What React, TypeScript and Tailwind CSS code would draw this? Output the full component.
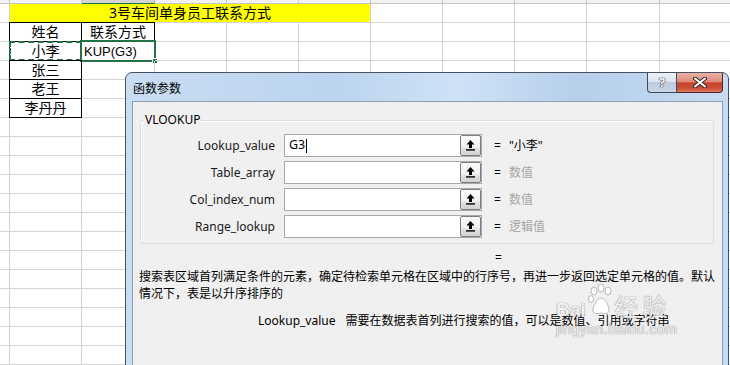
import React from "react";

const COLS =
  "grid grid-cols-[10px_72px_73px_72px_72px_72px_72px_72px_72px_73px_72px]";
const CELL = "relative h-[19px] border-r border-b border-[#d4d4d4]";

function BlackBox() {
  return (
    <div className="pointer-events-none absolute -left-px -top-px -right-px -bottom-px border border-black" />
  );
}

function Empty() {
  return <div className={CELL} />;
}

function Sheet() {
  const names = ["姓名", "小李", "张三", "老王", "李丹丹"];
  const rows: React.ReactNode[] = [];
  for (let r = 1; r <= 19; r++) {
    const cells: React.ReactNode[] = [];
    cells.push(<div key="c0" className={CELL} />);
    if (r === 1) {
      cells.push(
        <div
          key="y"
          className={`${CELL} col-span-5 bg-[#ffff00] flex items-center justify-center text-[14px] leading-none text-black`}
        >
          3号车间单身员工联系方式
        </div>
      );
      for (let i = 0; i < 5; i++) cells.push(<Empty key={"e" + i} />);
    } else if (r >= 2 && r <= 6) {
      cells.push(
        <div
          key="a"
          className={`${CELL} flex items-center justify-center text-[14px] leading-none text-black`}
        >
          {names[r - 2]}
          <BlackBox />
          {r === 3 && (
            <div className="pointer-events-none absolute -left-[1px] -top-[1px] -right-[1px] -bottom-[1px] border-2 border-dashed border-[#217346]" />
          )}
        </div>
      );
      if (r === 2) {
        cells.push(
          <div
            key="b"
            className={`${CELL} flex items-center justify-center text-[14px] leading-none text-black`}
          >
            联系方式
            <BlackBox />
          </div>
        );
      } else if (r === 3) {
        cells.push(
          <div
            key="b"
            className={`${CELL} flex items-center pl-[2px] font-['Liberation_Sans',sans-serif] text-[13px] leading-none text-black`}
          >
            KUP(G3)
            <div className="pointer-events-none absolute -left-[2px] -top-[2px] -right-[2px] -bottom-[2px] border-2 border-[#217346]" />
            <div className="pointer-events-none absolute -right-[4px] -bottom-[4px] h-[6px] w-[6px] border border-white bg-[#217346]" />
          </div>
        );
      } else {
        cells.push(<Empty key="b" />);
      }
      for (let i = 0; i < 8; i++) cells.push(<Empty key={"e" + i} />);
    } else {
      for (let i = 0; i < 10; i++) cells.push(<Empty key={"e" + i} />);
    }
    rows.push(
      <div key={r} className={COLS}>
        {cells}
      </div>
    );
  }

  const head: React.ReactNode[] = [];
  for (let i = 0; i < 11; i++) {
    head.push(
      <div
        key={i}
        className={
          i === 2
            ? "h-[4px] border-r border-b border-[#9fb3a6] border-b-[#217346] bg-[#d3d3d3]"
            : "h-[4px] border-r border-b border-[#c6c6c6] bg-[#f3f3f3]"
        }
      />
    );
  }

  return (
    <div className="flex flex-col">
      <div className={COLS}>{head}</div>
      {rows}
    </div>
  );
}

function RefButton() {
  return (
    <div className="ml-auto flex h-[21px] w-[21px] items-center justify-center rounded-[2px] border border-[#7e7e7e] bg-[linear-gradient(180deg,#fbfbfb_0%,#f1f1f1_55%,#dedede_70%,#d2d2d2_100%)]">
      <svg width="9" height="11" viewBox="0 0 9 11">
        <polygon points="4.5,0 0.5,4.5 3,4.5 3,8 6,8 6,4.5 8.5,4.5" fill="#000" />
        <rect x="0" y="9.2" width="9" height="1.4" fill="#000" />
      </svg>
    </div>
  );
}

function ArgRow({
  label,
  value,
  result,
  dim,
}: {
  label: string;
  value?: string;
  result: string;
  dim?: boolean;
}) {
  return (
    <div className="flex h-[23px] items-center">
      <div className="w-[134px] text-right text-[12px] leading-none text-[#1a1a1a]">
        {label}
      </div>
      <div className="ml-[9px] flex h-[23px] w-[198px] items-center border border-[#a9a9a9] bg-white">
        {value !== undefined && (
          <>
            <span className="pl-[4px] text-[12.5px] leading-none text-black">
              {value}
            </span>
            <span className="ml-[1px] h-[14px] w-px bg-black" />
          </>
        )}
        <RefButton />
      </div>
      <div className="ml-[12px] text-[12px] leading-none text-black">=</div>
      <div
        className={`ml-[8px] text-[12px] leading-none ${
          dim ? "text-[#a6a6a6]" : "text-black"
        }`}
      >
        {result}
      </div>
    </div>
  );
}

function Dialog() {
  return (
    <div className="absolute left-[125px] top-[72px] flex h-[300px] w-[604px] flex-col rounded-t-[7px] border border-[#47505e] bg-[linear-gradient(90deg,#c9ddf3_0%,#bcd4ef_35%,#cfe2f6_55%,#b7cfeb_75%,#c7dcf3_100%)]">
      <div className="flex h-[28px] items-start">
        <div className="pl-[7px] pt-[8px] text-[12px] leading-[15px] text-black">
          函数参数
        </div>
        <div className="ml-auto mr-[5px] flex">
          <div className="flex h-[20px] w-[30px] items-center justify-center rounded-bl-[4px] border border-t-0 border-[#3f4a5a] bg-[linear-gradient(180deg,#edf2f8_0%,#dbe4ef_45%,#bccbdc_50%,#c8d6e5_100%)] text-[13px] font-bold leading-none text-white [text-shadow:0_0_1px_#1d2633,0_0_1px_#1d2633,0_0_1px_#1d2633]">
            ?
          </div>
          <div className="flex h-[20px] w-[46px] items-center justify-center rounded-br-[4px] border border-l-0 border-t-0 border-[#4a2a26] bg-[linear-gradient(180deg,#ebb2a6_0%,#de8a78_45%,#c8432c_52%,#cc4c34_80%,#e07e62_100%)]">
            <svg width="14" height="11" viewBox="0 0 14 11">
              <path d="M2 1.5 L12 9.5 M12 1.5 L2 9.5" stroke="#3a2a28" strokeWidth="4" strokeLinecap="round" />
              <path d="M2 1.5 L12 9.5 M12 1.5 L2 9.5" stroke="#ffffff" strokeWidth="2" strokeLinecap="round" />
            </svg>
          </div>
        </div>
      </div>
      <div className="ml-[6px] mr-[5px] flex flex-1 flex-col border border-[#8f9fb3] bg-[#f0f0f0]">
        <div className="relative ml-[7px] mt-[18px] h-[124px] w-[574px] rounded-[3px] border border-[#d5dfe5] shadow-[inset_1px_1px_0_#ffffff]">
          <div className="absolute -top-[8px] left-[3px] bg-[#f0f0f0] px-[1px] text-[12px] leading-[14px] text-black">
            VLOOKUP
          </div>
          <div className="flex flex-col gap-[4px] pt-[13px]">
            <ArgRow label="Lookup_value" value="G3" result={'"小李"'} />
            <ArgRow label="Table_array" result="数值" dim />
            <ArgRow label="Col_index_num" result="数值" dim />
            <ArgRow label="Range_lookup" result="逻辑值" dim />
          </div>
        </div>
        <div className="mt-[5px] pl-[362px] text-[12px] leading-[17px] text-black">=</div>
        <div className="mt-[2px] pl-[6px] text-[12px] leading-[17px] text-black">
          <div>搜索表区域首列满足条件的元素，确定待检索单元格在区域中的行序号，再进一步返回选定单元格的值。默认</div>
          <div>情况下，表是以升序排序的</div>
        </div>
        <div className="mt-[10px] flex pl-[125px] text-[12px] leading-[17px] text-black">
          <span>Lookup_value</span>
          <span className="ml-[10px]">需要在数据表首列进行搜索的值，可以是数值、引用或字符串</span>
        </div>
      </div>
    </div>
  );
}

function Watermark() {
  return (
    <div className="pointer-events-none absolute left-[556px] top-[283px] flex flex-col text-white/90 [text-shadow:0_0_1px_rgba(90,90,90,0.7),0_0_1px_rgba(90,90,90,0.5)]">
      <div className="flex items-end">
        <span className="font-['Liberation_Sans',sans-serif] text-[19px] font-bold leading-none">Bai</span>
        <svg width="26" height="36" viewBox="0 0 26 36" className="ml-[2px]">
          <g fill="#ffffff" stroke="#b0b0b0" strokeWidth="0.9">
            <ellipse cx="6" cy="8" rx="3" ry="4" />
            <ellipse cx="13" cy="5" rx="3" ry="4" />
            <ellipse cx="20" cy="8" rx="3" ry="4" />
            <ellipse cx="3" cy="16" rx="2.6" ry="3.4" />
            <path d="M13 15 C9 15 5 23 5 27 C5 31 9 31 13 30 C17 31 21 31 21 27 C21 23 17 15 13 15 Z" />
          </g>
        </svg>
        <span className="ml-[1px] text-[24px] leading-none tracking-[4px]">经验</span>
      </div>
      <div className="mt-[3px] font-['Liberation_Sans',sans-serif] text-[14px] leading-none tracking-[0.5px]">
        jingyan.baidu.com
      </div>
    </div>
  );
}

export default function App() {
  return (
    <div className="relative h-[365px] w-[730px] overflow-hidden bg-white font-['Noto_Sans','Noto_Sans_CJK_SC',sans-serif]">
      <Sheet />
      <Dialog />
      <Watermark />
    </div>
  );
}
